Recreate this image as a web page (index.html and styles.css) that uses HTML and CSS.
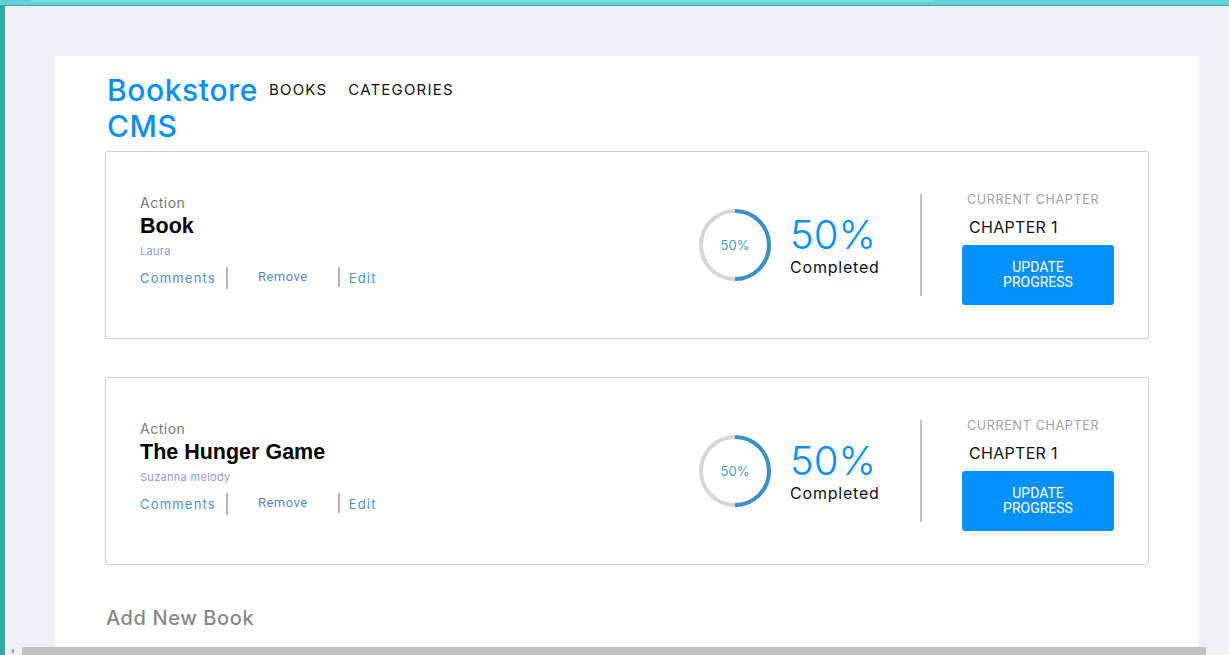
FILE: index.html
```html
<!DOCTYPE html>
<html lang="en">
<head>
<meta charset="utf-8">
<title>Bookstore CMS</title>
<link rel="stylesheet" href="styles.css">
</head>
<body>
<div class="topbar"><div class="topbar-pill"></div></div>
<div class="side-strip"></div>
<main class="panel">
  <header class="header">
    <h1 class="logo">Bookstore CMS</h1>
    <nav class="nav">
      <a class="nav-link" href="#">BOOKS</a>
      <a class="nav-link" href="#">CATEGORIES</a>
    </nav>
  </header>

  <section class="books">
    <article class="card">
      <div class="info">
        <p class="genre">Action</p>
        <h2 class="title">Book</h2>
        <p class="author">Laura</p>
        <ul class="actions">
          <li class="act act-first">Comments</li>
          <li class="act act-mid">Remove</li>
          <li class="act act-last">Edit</li>
        </ul>
      </div>
      <div class="progress">
        <div class="ring">
          <svg width="72" height="72" viewBox="0 0 72 72">
            <circle cx="36" cy="36" r="34" fill="none" stroke="#d6d6d6" stroke-width="4"/>
            <path d="M36 2 A34 34 0 0 1 36 70" fill="none" stroke="#3b90c8" stroke-width="4"/>
          </svg>
          <span class="ring-label">50%</span>
        </div>
        <div class="pct">
          <p class="pct-num">50%</p>
          <p class="pct-label">Completed</p>
        </div>
      </div>
      <div class="divider"></div>
      <div class="chapter">
        <p class="chapter-label">CURRENT CHAPTER</p>
        <p class="chapter-name">CHAPTER 1</p>
        <button class="update-btn">UPDATE<br>PROGRESS</button>
      </div>
    </article>

    <article class="card">
      <div class="info">
        <p class="genre">Action</p>
        <h2 class="title">The Hunger Game</h2>
        <p class="author">Suzanna melody</p>
        <ul class="actions">
          <li class="act act-first">Comments</li>
          <li class="act act-mid">Remove</li>
          <li class="act act-last">Edit</li>
        </ul>
      </div>
      <div class="progress">
        <div class="ring">
          <svg width="72" height="72" viewBox="0 0 72 72">
            <circle cx="36" cy="36" r="34" fill="none" stroke="#d6d6d6" stroke-width="4"/>
            <path d="M36 2 A34 34 0 0 1 36 70" fill="none" stroke="#3b90c8" stroke-width="4"/>
          </svg>
          <span class="ring-label">50%</span>
        </div>
        <div class="pct">
          <p class="pct-num">50%</p>
          <p class="pct-label">Completed</p>
        </div>
      </div>
      <div class="divider"></div>
      <div class="chapter">
        <p class="chapter-label">CURRENT CHAPTER</p>
        <p class="chapter-name">CHAPTER 1</p>
        <button class="update-btn">UPDATE<br>PROGRESS</button>
      </div>
    </article>
  </section>

  <h3 class="add-title">Add New Book</h3>
</main>
<div class="hscroll">
  <span class="hscroll-arrow"></span>
  <div class="hscroll-thumb"></div>
</div>
</body>
</html>
```

FILE: styles.css
```css
* { box-sizing: border-box; }
html, body { margin: 0; padding: 0; }
body {
  background: #eff1f4;
  font-family: "Inter", "DejaVu Sans", sans-serif;
  height: 655px;
  overflow: hidden;
}
p, h1, h2, h3, ul { margin: 0; padding: 0; }

.topbar {
  height: 6px;
  background: #5fd3d3;
  border-bottom: 1px solid #46a9a9;
  position: relative;
}
.topbar-pill {
  position: absolute;
  left: 30px;
  top: 0;
  width: 905px;
  height: 2px;
  background: #7fdcda;
  border-radius: 0 0 4px 4px;
}
.side-strip {
  position: fixed;
  left: 0;
  top: 6px;
  bottom: 0;
  width: 5px;
  background: #33a9a9;
}

.panel {
  margin: 50px 0 0 55px;
  width: 1144px;
  background: #fff;
  padding: 16px 50px 40px 50px;
  min-height: 600px;
}

.header {
  display: flex;
  align-items: flex-start;
}
.logo {
  width: 164px;
  font-size: 30px;
  font-weight: 500;
  line-height: 36px;
  color: #0290ff;
  padding-left: 2px;
  letter-spacing: 0.6px;
}
.nav {
  display: flex;
  gap: 21px;
  padding-top: 8px;
}
.nav-link {
  font-size: 15px;
  color: #121212;
  text-decoration: none;
  letter-spacing: 1.2px;
}

.books {
  display: flex;
  flex-direction: column;
  gap: 38px;
  margin-top: 7px;
}
.card {
  height: 188px;
  border: 1px solid #cfcfcf;
  border-radius: 2px;
  display: flex;
  align-items: center;
  padding: 0 34px 0 34px;
}
.info {
  flex: 1;
  padding-bottom: 9px;
}
.genre {
  font-size: 14px;
  color: #787878;
  line-height: 20px;
  letter-spacing: 0.5px;
}
.title {
  font-family: "Liberation Sans", Arial, sans-serif;
  font-size: 21.5px;
  font-weight: 700;
  color: #000;
  line-height: 27px;
}
.author {
  font-size: 11px;
  color: #8c9ad8;
  line-height: 22px;
  letter-spacing: 0.3px;
}
.actions {
  list-style: none;
  display: flex;
  align-items: center;
  margin-top: 5px;
}
.act {
  font-size: 13px;
  color: #4b8fd6;
  line-height: 22px;
  letter-spacing: 1.2px;
}
.act-first {
  padding-right: 10px;
  border-right: 2px solid #b5b5b5;
}
.act-mid {
  font-family: "Roboto", sans-serif;
  font-size: 13px;
  color: #5a86c2;
  padding: 0 30px 0 30px;
  border-right: 2px solid #b5b5b5;
  line-height: 20px;
  margin-top: -2px;
  letter-spacing: 0.5px;
}
.act-last {
  padding-left: 9px;
}

.progress {
  width: 221px;
  display: flex;
  align-items: center;
  gap: 19px;
}
.ring {
  position: relative;
  width: 72px;
  height: 72px;
}
.ring svg { display: block; }
.ring-label {
  position: absolute;
  inset: 0;
  display: flex;
  align-items: center;
  justify-content: center;
  font-size: 13px;
  color: #4a9ad0;
}
.pct-num {
  font-size: 40px;
  font-weight: 300;
  color: #0290ff;
  line-height: 44px;
}
.pct-label {
  font-size: 16px;
  color: #121212;
  line-height: 20px;
  letter-spacing: 0.8px;
}

.divider {
  width: 2px;
  height: 102px;
  background: #c0c0c0;
  margin-right: 40px;
}
.chapter {
  width: 152px;
  padding-top: 6px;
}
.chapter-label {
  font-size: 12.5px;
  color: #a0a0a0;
  line-height: 16px;
  padding-left: 5px;
  letter-spacing: 0.7px;
}
.chapter-name {
  font-size: 16px;
  color: #121212;
  line-height: 20px;
  padding-left: 7px;
  margin-top: 9px;
  letter-spacing: 0.3px;
}
.update-btn {
  display: block;
  width: 152px;
  height: 60px;
  margin-top: 8px;
  border: none;
  border-radius: 3px;
  background: #0290ff;
  color: #fff;
  font-family: "Roboto", sans-serif;
  font-size: 14px;
  line-height: 15px;
  padding: 0;
}

.add-title {
  margin-top: 41px;
  font-size: 20px;
  font-weight: 500;
  color: #888;
  padding-left: 1px;
  letter-spacing: 0.6px;
}

.hscroll {
  position: fixed;
  left: 5px;
  right: 0;
  bottom: 0;
  height: 8px;
  background: #f1f1f1;
  display: flex;
  align-items: center;
}
.hscroll-arrow {
  width: 0;
  height: 0;
  border-top: 3px solid transparent;
  border-bottom: 3px solid transparent;
  border-right: 3px solid #a3a3a3;
  margin-left: 6px;
  margin-right: 8px;
}
.hscroll-thumb {
  width: 1184px;
  height: 8px;
  background: #c1c1c1;
}
```
